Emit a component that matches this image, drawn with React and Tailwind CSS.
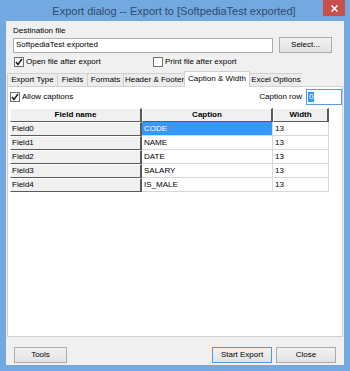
const rows = [
  { name: 'Field0', caption: 'CODE', width: '13', selected: true },
  { name: 'Field1', caption: 'NAME', width: '13' },
  { name: 'Field2', caption: 'DATE', width: '13' },
  { name: 'Field3', caption: 'SALARY', width: '13' },
  { name: 'Field4', caption: 'IS_MALE', width: '13' },
]

const tabs = ['Export Type', 'Fields', 'Formats', 'Header & Footer', 'Caption & Width', 'Excel Options']
const tabWidths = ['w-[50px]', 'w-[30px]', 'w-[36px]', 'w-[62px]', 'w-[66px]', 'w-[53px]']

function Check({ checked }) {
  return (
    <span className="w-[10px] h-[10px] border border-[#707070] bg-white flex items-center justify-center shrink-0">
      {checked && (
        <svg width="8" height="8" viewBox="0 0 8 8">
          <path d="M1 4 L3 6.5 L7 1" fill="none" stroke="#222" strokeWidth="1.6" />
        </svg>
      )}
    </span>
  )
}

function Button({ children, width, primary }) {
  return (
    <button
      className={`${width} h-[16px] flex items-center justify-center bg-gradient-to-b from-[#f2f2f2] to-[#e3e3e3] border ${primary ? 'border-[#4a9be6]' : 'border-[#acacac]'}`}
    >
      {children}
    </button>
  )
}

export default function App() {
  return (
    <div
      className="w-[350px] h-[371px] bg-[#72a9e0] flex flex-col px-[6px] pb-[6px] text-[8px] text-black overflow-hidden"
      style={{ fontFamily: '"Liberation Sans", Arial, sans-serif' }}
    >
      {/* title bar */}
      <div className="h-[21px] shrink-0 relative flex items-center justify-center">
        <span className="text-[11px] text-[#2f4a6b] pt-[2px] pr-[2px]">
          Export dialog -- Export to [SoftpediaTest exported]
        </span>
        <div className="absolute right-[-1px] top-0 w-[22px] h-[16px] bg-[#c9504a] flex items-center justify-center">
          <svg width="7" height="7" viewBox="0 0 7 7">
            <path d="M0.5 0.5 L6.5 6.5 M6.5 0.5 L0.5 6.5" stroke="white" strokeWidth="1.5" />
          </svg>
        </div>
      </div>

      {/* client area */}
      <div className="flex-1 bg-[#f0f0f0] flex flex-col px-[1px]">
        <div className="px-[6px]">
          <div className="h-[10px] mt-[5px] leading-[10px]">Destination file</div>
          <div className="flex items-center mt-[1px]">
            <div className="w-[260px] h-[15px] border border-[#abadb3] bg-white flex items-center pl-[2px]">
              SoftpediaTest exported
            </div>
            <div className="ml-[6px]">
              <Button width="w-[53px]">Select...</Button>
            </div>
          </div>
          <div className="flex items-center h-[12px] mt-[3px]">
            <div className="flex items-center gap-[2px] w-[140px] pl-[1px]">
              <Check checked />
              <span>Open file after export</span>
            </div>
            <div className="flex items-center gap-[2px]">
              <Check />
              <span>Print file after export</span>
            </div>
          </div>
        </div>

        {/* tabs */}
        <div className="flex items-end h-[15px] mt-[3px] relative z-10">
          {tabs.map((t, i) => {
            const active = i === 4
            return (
              <div
                key={t}
                className={`${tabWidths[i]} flex items-center justify-center border border-[#d0d0d0] ${
                  active ? 'h-[16px] bg-white border-b-0 -mb-[1px] -mx-[1px] pb-[2px]' : 'h-[13px] bg-[#ececec] border-b-0 border-r-0'
                }`}
              >
                {t}
              </div>
            )
          })}
        </div>

        {/* panel */}
        <div className="h-[251px] bg-white border border-[#d0d0d0] flex flex-col overflow-hidden">
          <div className="flex items-center h-[16px] mt-[2px] pl-[2px]">
            <Check checked />
            <span className="ml-[2px]">Allow captions</span>
            <span className="ml-auto mr-[4px]">Caption row</span>
            <div className="w-[36px] h-[16px] border border-[#569de5] flex items-center pl-[1px]">
              <span className="bg-[#3399ff] text-white px-[1px] leading-[10px]">0</span>
            </div>
          </div>

          {/* grid */}
          <div className="ml-[2px] mt-[3px] w-[319px] flex flex-col">
            <div className="flex h-[14px] font-bold">
              <div className="w-[132px] bg-[#f0f0f0] border-t border-l border-t-white border-l-white border-r-2 border-b border-[#5a5a5a] flex items-center justify-center">
                Field name
              </div>
              <div className="w-[131px] bg-[#f0f0f0] border-t border-l border-t-white border-l-white border-r-2 border-b border-[#5a5a5a] flex items-center justify-center">
                Caption
              </div>
              <div className="w-[56px] bg-[#f0f0f0] border-t border-l border-t-white border-l-white border-r-2 border-b border-[#5a5a5a] flex items-center justify-center">
                Width
              </div>
            </div>
            {rows.map((r) => (
              <div key={r.name} className="flex h-[14px]">
                <div className="w-[132px] bg-[#f0f0f0] border-t border-l border-t-white border-l-white border-r-2 border-b border-[#5a5a5a] flex items-center pl-[1px]">
                  {r.name}
                </div>
                <div
                  className={`w-[131px] border-r border-b border-[#d8d8d8] flex items-center pl-[2px] ${
                    r.selected ? 'bg-[#3399ff] text-white' : ''
                  }`}
                >
                  {r.caption}
                </div>
                <div className="w-[56px] border-r border-b border-[#d8d8d8] flex items-center pl-[2px]">{r.width}</div>
              </div>
            ))}
          </div>
        </div>

        {/* buttons */}
        <div className="flex items-center mt-[10px] px-[7px]">
          <Button width="w-[53px]">Tools</Button>
          <div className="ml-auto flex gap-[4px]">
            <Button width="w-[60px]" primary>
              Start Export
            </Button>
            <Button width="w-[60px]">Close</Button>
          </div>
        </div>
      </div>
    </div>
  )
}
